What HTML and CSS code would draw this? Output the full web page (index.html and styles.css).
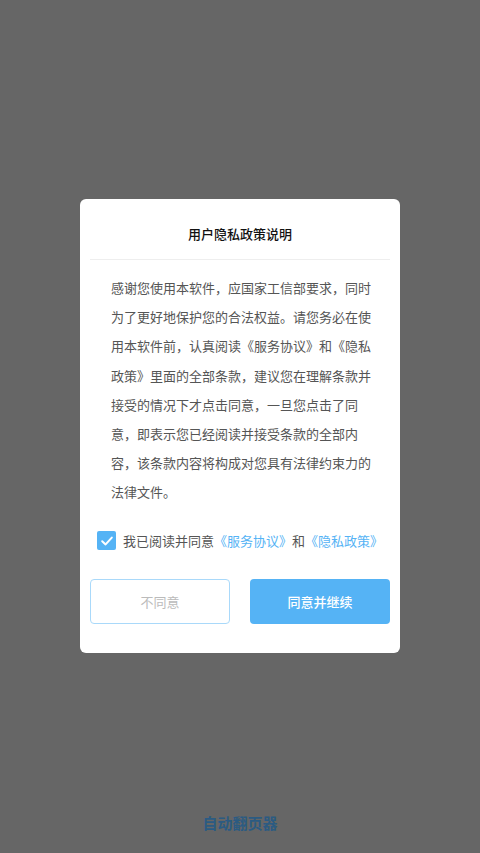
FILE: index.html
```html
<!DOCTYPE html>
<html lang="zh">
<head>
<meta charset="utf-8">
<link rel="stylesheet" href="styles.css">
</head>
<body>
<div class="screen">
  <div class="center">
    <div class="dialog">
      <div class="title">用户隐私政策说明</div>
      <div class="divider"></div>
      <p class="body">感谢您使用本软件，应国家工信部要求，同时为了更好地保护您的合法权益。请您务必在使用本软件前，认真阅读《服务协议》和《隐私政策》里面的全部条款，建议您在理解条款并接受的情况下才点击同意，一旦您点击了同意，即表示您已经阅读并接受条款的全部内容，该条款内容将构成对您具有法律约束力的法律文件。</p>
      <div class="agree">
        <span class="check"><svg width="14" height="14" viewBox="0 0 14 14"><path d="M2.2 7.2 L5.6 10.4 L11.8 3.6" fill="none" stroke="#fff" stroke-width="2" stroke-linecap="round" stroke-linejoin="round"/></svg></span>
        <span class="agree-text">我已阅读并同意<span class="link">《服务协议》</span>和<span class="link">《隐私政策》</span></span>
      </div>
      <div class="buttons">
        <div class="btn btn-no">不同意</div>
        <div class="btn btn-yes">同意并继续</div>
      </div>
    </div>
  </div>
  <div class="footer">自动翻页器</div>
</div>
</body>
</html>
```
FILE: styles.css
```css
html, body {
  margin: 0;
  padding: 0;
}
body {
  font-family: "Noto Sans CJK SC", "Noto Sans", sans-serif;
  background: #666666;
}
.screen {
  width: 480px;
  height: 853px;
  display: flex;
  flex-direction: column;
  background: #666666;
}
.center {
  padding-top: 199px;
  display: flex;
  justify-content: center;
}
.dialog {
  width: 320px;
  height: 454px;
  background: #ffffff;
  border-radius: 6px;
  box-sizing: border-box;
  padding: 0 10px;
  display: flex;
  flex-direction: column;
}
.title {
  height: 60px;
  line-height: 70px;
  text-align: center;
  font-size: 13px;
  font-weight: 500;
  color: #111;
}
.divider {
  height: 1px;
  background: #eeeeee;
}
.body {
  margin: 13px 0 0;
  padding: 0 17px 0 21px;
  font-size: 13px;
  line-height: 29.2px;
  color: #555555;
  text-align: left;
}
.agree {
  margin-top: 24px;
  display: flex;
  align-items: center;
  padding-left: 7px;
  height: 20px;
}
.check {
  width: 19px;
  height: 19px;
  border-radius: 2px;
  background: #55b3f5;
  display: flex;
  align-items: center;
  justify-content: center;
  margin-right: 7px;
}
.agree-text {
  font-size: 13px;
  color: #555555;
  white-space: nowrap;
}
.link {
  color: #55b3f5;
}
.buttons {
  margin-top: 28px;
  display: flex;
  justify-content: space-between;
}
.btn {
  width: 140px;
  height: 45px;
  box-sizing: border-box;
  border-radius: 4px;
  display: flex;
  align-items: center;
  justify-content: center;
  font-size: 13px;
}
.btn-no {
  border: 1px solid #a9d9fa;
  color: #bbbbbb;
  background: #fff;
}
.btn-yes {
  background: #55b3f5;
  color: #ffffff;
  font-weight: 500;
}
.footer {
  margin-top: auto;
  height: 40px;
  text-align: center;
  font-size: 15px;
  font-weight: 700;
  color: #2b5b82;
  line-height: 20px;
}
```
